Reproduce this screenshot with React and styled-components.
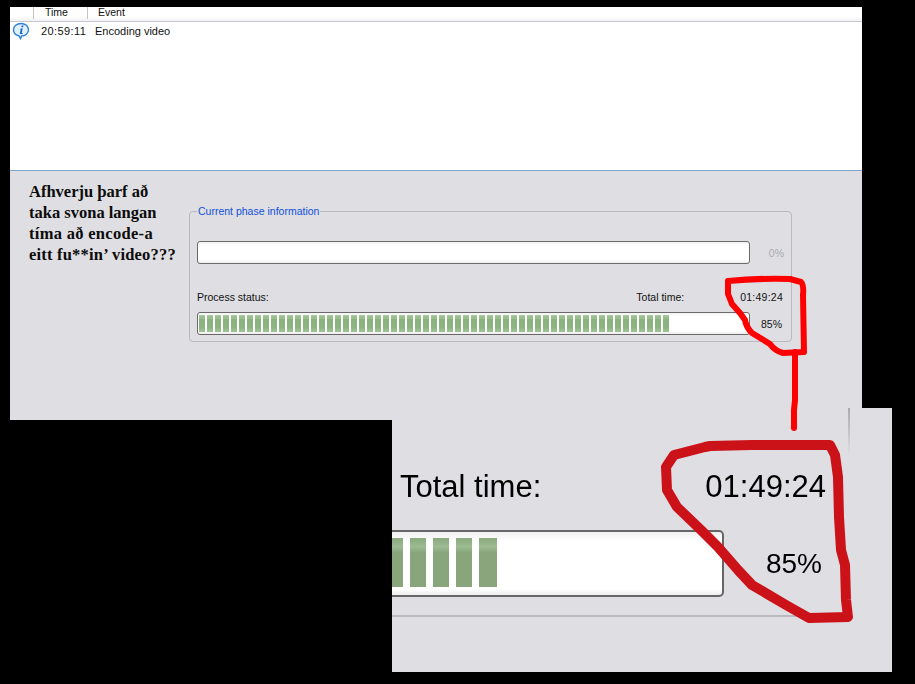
import React from "react";
import styled, { createGlobalStyle } from "styled-components";

const GlobalStyle = createGlobalStyle`
html, body {
  margin: 0;
  background: #000;
}
body {
  font-family: "Liberation Sans", Arial, sans-serif;
}
`;

const SEGMENTS = 59;

const Page = styled.div`
position: relative;
width: 915px;
height: 684px;
overflow: hidden;
background: #000;
padding: 7px 0 0 10px;
box-sizing: border-box;
`;

const Win = styled.div`
width: 852px;
height: 413px;
display: flex;
flex-direction: column;
font-size: 10.5px;
color: #111;
`;

const ListHead = styled.div`
height: 14px;
flex: none;
display: flex;
align-items: flex-start;
background: linear-gradient(#fff 70%, #f1f1f4);
border-bottom: 1px solid #c9c9d2;
overflow: hidden;
`;

const HeadCell = styled.div`
width: ${(p) => p.$w}px;
height: 12px;
line-height: 10px;
padding-left: ${(p) => p.$pad || 0}px;
box-sizing: border-box;
border-left: ${(p) => (p.$sep ? "1px solid #c4c4c4" : "0")};
`;

const List = styled.div`
flex: none;
height: 149px;
box-sizing: border-box;
background: #fff;
border-bottom: 1px solid #7ea6c8;
`;

const LogRow = styled.div`
height: 18px;
display: flex;
align-items: center;
padding-left: 2px;
font-size: 11px;
`;

const Clock = styled.span`
margin-left: 11px;
width: 54px;
letter-spacing: 0.4px;
`;

const Lower = styled.div`
flex: 1;
display: flex;
background: #dfdfe3;
padding: 10px 0 0 19px;
`;

const Question = styled.div`
width: 160px;
font-family: "Liberation Serif", "Times New Roman", serif;
font-weight: bold;
font-size: 16.5px;
line-height: 21px;
color: #0c0c0c;
`;

const QuestionLine = styled.div`
white-space: nowrap;
letter-spacing: ${(p) => p.$spread || 0}px;
`;

const Group = styled.fieldset`
margin: 24px 0 0 0;
padding: 0 7px 0 7px;
width: 603px;
height: 137px;
box-sizing: border-box;
border: 1px solid #b9b9be;
border-radius: 4px;
min-width: 0;
`;

const Legend = styled.legend`
padding: 0 1px;
margin-left: 0;
font-size: 10.5px;
line-height: 12px;
color: #0f50d8;
`;

const Row = styled.div`
display: flex;
align-items: center;
`;

const BarRow = styled(Row)`
margin-top: ${(p) => p.$top || 0}px;
`;

const LabelRow = styled(Row)`
margin-top: 27px;
height: 12px;
margin-bottom: 9px;
`;

const Label = styled.span`
width: 440px;
`;

const TotalLabel = styled.span`
width: 104px;
`;

const Bar = styled.div`
width: 553px;
height: 23px;
flex: none;
box-sizing: border-box;
border: 1px solid #6b6b6b;
border-radius: 3px;
background: linear-gradient(#f2f2f2, #fff 15%, #fff 85%, #ececec);
padding: 2px 1px;
display: flex;
gap: 2px;
`;

const Segment = styled.i`
width: 6px;
height: 100%;
background: linear-gradient(#a9c9a0, #8ab37f 30%, #8ab37f 70%, #a0c297);
`;

const Percent = styled.span`
flex: 1;
white-space: nowrap;
text-align: right;
padding-right: ${(p) => p.$pad || 0}px;
color: ${(p) => (p.$dim ? "#a9a9ad" : "#111")};
`;

const ElapsedValue = styled(Percent)`
letter-spacing: 0.25px;
`;

const ZoomPanel = styled.div`
position: absolute;
left: 392px;
top: 408px;
width: 500px;
height: 264px;
background: #dfdfe3;
filter: blur(0.7px);
color: #000;
`;

const ZoomGroup = styled.div`
position: relative;
width: 458px;
height: 209px;
box-sizing: border-box;
border-bottom: 2px solid #b9b9be;
padding-top: 60px;
&::after {
  content: "";
  position: absolute;
  top: 0;
  right: 0;
  width: 2px;
  height: 48px;
  background: linear-gradient(#a9a9ae, #dfdfe3);
}
`;

const ZoomLabels = styled.div`
display: flex;
justify-content: space-between;
align-items: center;
height: 38px;
padding: 0 24px 0 8px;
font-size: 31px;
`;

const ZoomBarRow = styled(Row)`
margin-top: 24px;
`;

const ZoomBar = styled.div`
width: 332px;
height: 67px;
flex: none;
box-sizing: border-box;
border: 2px solid #666;
border-left: 0;
border-radius: 0 5px 5px 0;
background: linear-gradient(#f0f0f0, #fff 15%, #fff 90%, #eee);
padding: 6px 0 8px 0;
display: flex;
gap: 7px;
`;

const ZoomSegment = styled.i`
width: ${(p) => p.$w}px;
height: 100%;
background: linear-gradient(#8aa97e, #9dbb92 18%, #88a57c 30%, #88a57c);
`;

const ZoomPercent = styled.span`
flex: 1;
text-align: right;
padding-right: 28px;
font-size: 28px;
`;

const Scribble = styled.svg`
position: absolute;
left: 0;
top: 0;
pointer-events: none;
`;

const InfoIcon = () => (
  <svg width="18" height="18" viewBox="0 0 18 18">
    <path d="M9 1.5c4.2 0 7.500 2.800 7.500 6.300S13.200 14 9.600 14l-1.100 2.600L7 13.800C3.800 13.300 1.500 11 1.500 7.800 1.500 4.300 4.800 1.500 9 1.500z" fill="#dff0ff" stroke="#2f80d8" strokeWidth="1.400" />
    <path d="M9.700 3.600h1.800l-.4 1.700H9.300zM8.900 6.500h1.800l-1 4.500h1v1H7.700l1-4.500H8z" fill="#1a66c4" />
  </svg>
);

const App = () => {
  return (
    <Page>
      <GlobalStyle />
      <Win>
        <ListHead>
          <HeadCell $w={23} />
          <HeadCell $w={54} $sep $pad={11}>Time</HeadCell>
          <HeadCell $w={120} $sep $pad={10}>Event</HeadCell>
        </ListHead>
        <List>
          <LogRow>
            <InfoIcon />
            <Clock>20:59:11</Clock>
            <span>Encoding video</span>
          </LogRow>
        </List>
        <Lower>
          <Question>
            <QuestionLine>Afhverju þarf að</QuestionLine>
            <QuestionLine>taka svona langan</QuestionLine>
            <QuestionLine $spread={0.3}>tíma að encode-a</QuestionLine>
            <QuestionLine $spread={0.2}>eitt fu**in’ video???</QuestionLine>
          </Question>
          <Group>
            <Legend>Current phase information</Legend>
            <BarRow $top={24}>
              <Bar />
              <Percent $dim>0%</Percent>
            </BarRow>
            <LabelRow>
              <Label>Process status:</Label>
              <TotalLabel>Total time:</TotalLabel>
              <ElapsedValue $pad={1}>01:49:24</ElapsedValue>
            </LabelRow>
            <BarRow>
              <Bar>
                {Array.from({ length: SEGMENTS }, (_, i) => (
                  <Segment key={i} />
                ))}
              </Bar>
              <Percent $pad={2}>85%</Percent>
            </BarRow>
          </Group>
        </Lower>
      </Win>
      <ZoomPanel>
        <ZoomGroup>
          <ZoomLabels>
            <span>Total time:</span>
            <span>01:49:24</span>
          </ZoomLabels>
          <ZoomBarRow>
            <ZoomBar>
              {[11, 16, 16, 16, 18].map((w, i) => (
                <ZoomSegment key={i} $w={w} />
              ))}
            </ZoomBar>
            <ZoomPercent>85%</ZoomPercent>
          </ZoomBarRow>
        </ZoomGroup>
      </ZoomPanel>
      <Scribble width="915" height="684" viewBox="0 0 915 684">
        <path
          d="M728 281 Q760 278 790 279 L801 282 Q804 285 803 295 L804 352 L783 353 Q775 351 770 344 L752 333 Q746 327 745 320 L740 313 L732 304 L728 294 Z"
          fill="none"
          stroke="#fe0000"
          strokeWidth="6"
          strokeLinejoin="round"
        />
        <path d="M795 352 L795 400 L794 410 L794 428" fill="none" stroke="#fe0000" strokeWidth="6" strokeLinecap="round" />
        <path
          d="M710 446 L752 445 L830 445 L835 455 L838 477 L839 517 L841 550 L845 565 L846 600 L848 617 L809 618 L786 605 L752 585 L738 570 L718 547 L701 530 L677 507 L667 490 L666 467 L674 455 L705 447 Z"
          fill="none"
          stroke="#cc1219"
          strokeWidth="10"
          strokeLinejoin="round"
        />
      </Scribble>
    </Page>
  );
};

export default App;
